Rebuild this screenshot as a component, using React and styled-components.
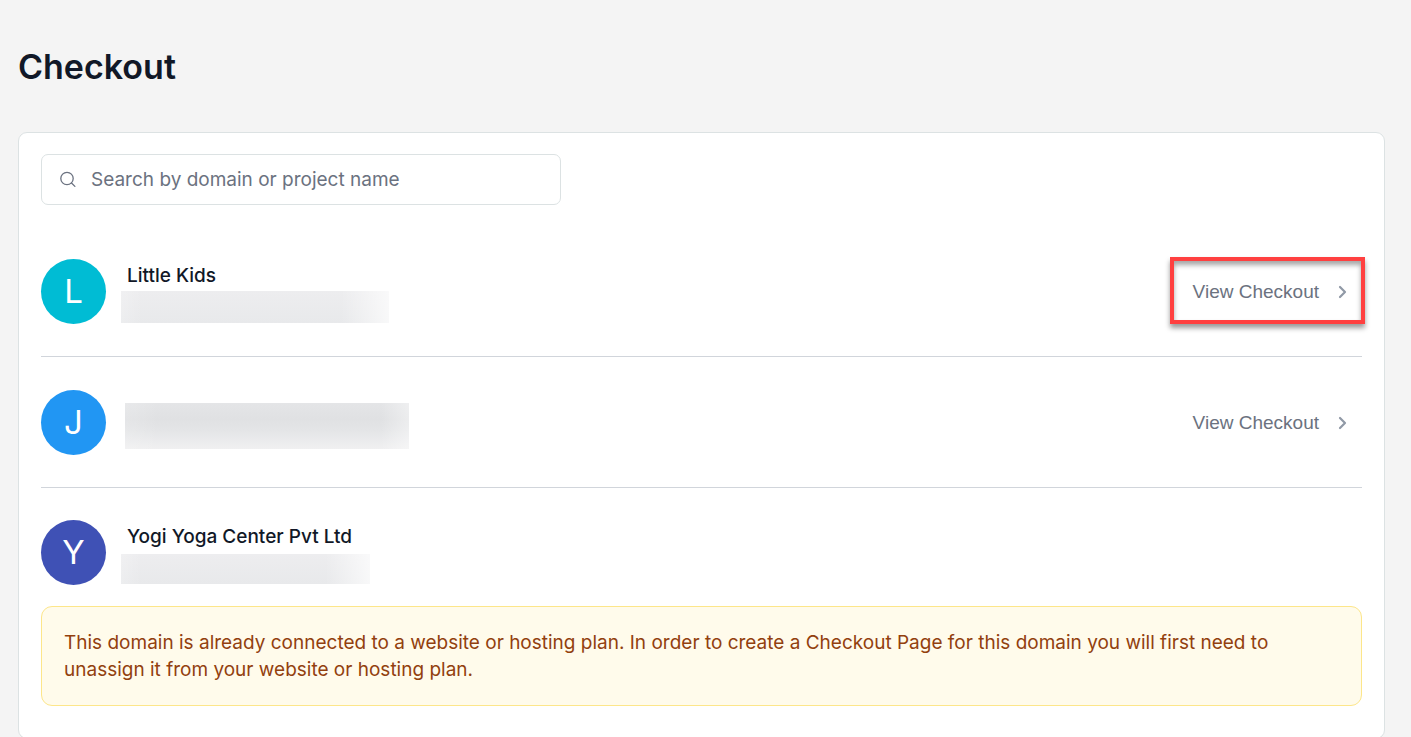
import React from "react";
import styled, { createGlobalStyle, css } from "styled-components";

const GlobalStyle = createGlobalStyle`
  *, *::before, *::after { box-sizing: border-box; }
  body {
    margin: 0;
    background: #f4f4f4;
    color: #111827;
    font-family: Inter, "Liberation Sans", sans-serif;
    font-size: 19px;
    line-height: 27px;
  }
`;

const Page = styled.main`
  padding: 43px 26px 0 18px;
`;

const Title = styled.h1`
  margin: 0 0 41px;
  font-size: 34px;
  line-height: 48px;
  font-weight: 600;
`;

const Card = styled.section`
  padding: 21px 22px 32px;
  background: #fff;
  border: 1px solid #dce2e3;
  border-radius: 9px;
`;

const SearchBox = styled.label`
  display: flex;
  align-items: center;
  gap: 15px;
  width: 520px;
  max-width: 100%;
  height: 51px;
  padding: 0 17px;
  border: 1px solid #dce2e3;
  border-radius: 7px;
  color: #6b7280;
`;

const SearchInput = styled.input`
  flex: 1;
  min-width: 0;
  padding: 0;
  border: 0;
  outline: 0;
  background: transparent;
  color: #111827;
  font: inherit;
  &::placeholder { color: #6b7280; opacity: 1; }
`;

const List = styled.ul`
  list-style: none;
  margin: 21px 0 0;
  padding: 0;
`;

const Item = styled.li`
  padding: 33px 0 32px;
  border-bottom: 1px solid #d1d5db;
  &:last-child {
    padding: 32px 0 0;
    border-bottom: 0;
  }
`;

const ItemRow = styled.div`
  display: flex;
  align-items: center;
  gap: 15px;
`;

const Avatar = styled.div`
  display: flex;
  align-items: center;
  justify-content: center;
  flex: none;
  width: 65px;
  height: 65px;
  padding-bottom: 2px;
  border-radius: 50%;
  background: ${(p) => p.$color};
  color: #fff;
  font-size: 33px;
  line-height: 40px;
`;

const Details = styled.div`
  flex: 1;
  min-width: 0;
  align-self: flex-start;
`;

const Name = styled.h2`
  margin: 0;
  padding: 2px 0 0 6px;
  font-size: 19px;
  line-height: 30px;
  font-weight: 500;
`;

const tones = {
  light: css`
    background:
      linear-gradient(90deg, rgba(255, 255, 255, 0.2), transparent 8%, transparent 82%, rgba(255, 255, 255, 0.7)),
      linear-gradient(#ededef, #e8e9eb);
  `,
  dark: css`
    background:
      linear-gradient(90deg, rgba(255, 255, 255, 0.15), transparent 12%, transparent 90%, rgba(255, 255, 255, 0.4)),
      linear-gradient(#e4e5e7, #e0e1e3 35%, #e4e5e7 60%, #f0f0f1);
  `,
};

const Redacted = styled.div`
  width: ${(p) => p.$width}px;
  max-width: 100%;
  height: ${(p) => p.$height}px;
  margin: ${(p) => p.$margin || "0"};
  ${(p) => tones[p.$tone || "light"]}
`;

const Action = styled.div`
  position: relative;
  flex: none;
`;

const ViewButton = styled.button`
  display: flex;
  align-items: center;
  gap: 18px;
  padding: 0 14px 0 0;
  border: 0;
  background: transparent;
  color: #6b7280;
  font: 19px/27px "Liberation Sans", Arial, sans-serif;
  cursor: pointer;
`;

const Highlight = styled.span`
  position: absolute;
  inset: -21px -3px -19px -23px;
  border: 4px solid #ff4040;
  box-shadow: 0 4px 5px rgba(0, 0, 0, 0.4), inset 0 4px 5px rgba(0, 0, 0, 0.35);
  pointer-events: none;
`;

const Notice = styled.p`
  margin: 21px 0 0;
  padding: 22px;
  border: 1px solid #fde68a;
  border-radius: 11px;
  background: #fffbeb;
  color: #92400e;
`;

function SearchIcon() {
  return (
    <svg width="17" height="17" viewBox="0 0 17 17" fill="none" stroke="currentColor" strokeWidth="1.3" strokeLinecap="round" aria-hidden="true">
      <circle cx="8" cy="7.5" r="6.2" />
      <path d="M12.5 12l3.4 3.4" />
    </svg>
  );
}

function ChevronIcon() {
  return (
    <svg width="11" height="14" viewBox="0 0 11 14" fill="none" stroke="#9099a6" strokeWidth="2.2" strokeLinecap="round" strokeLinejoin="round" aria-hidden="true">
      <path d="M3 2l5 5-5 5" />
    </svg>
  );
}

const projects = [
  { letter: "L", color: "#00bcd4", name: "Little Kids", bar: { $width: 268, $height: 32 }, action: true, highlighted: true },
  { letter: "J", color: "#2196f3", bar: { $width: 284, $height: 46, $margin: "13px 0 0 4px", $tone: "dark" }, action: true },
  {
    letter: "Y",
    color: "#3f51b5",
    name: "Yogi Yoga Center Pvt Ltd",
    bar: { $width: 249, $height: 30, $margin: "2px 0 0" },
    notice:
      "This domain is already connected to a website or hosting plan. In order to create a Checkout Page for this domain you will first need to unassign it from your website or hosting plan.",
  },
];

function Project({ project }) {
  return (
    <Item>
      <ItemRow>
        <Avatar $color={project.color}>{project.letter}</Avatar>
        <Details>
          {project.name && <Name>{project.name}</Name>}
          <Redacted {...project.bar} />
        </Details>
        {project.action && (
          <Action>
            <ViewButton type="button">
              View Checkout
              <ChevronIcon />
            </ViewButton>
            {project.highlighted && <Highlight />}
          </Action>
        )}
      </ItemRow>
      {project.notice && <Notice>{project.notice}</Notice>}
    </Item>
  );
}

export default function App() {
  return (
    <>
      <GlobalStyle />
      <Page>
        <Title>Checkout</Title>
        <Card>
          <SearchBox>
            <SearchIcon />
            <SearchInput type="text" aria-label="Search by domain or project name" placeholder="Search by domain or project name" />
          </SearchBox>
          <List>
            {projects.map((project) => (
              <Project key={project.letter} project={project} />
            ))}
          </List>
        </Card>
      </Page>
    </>
  );
}
